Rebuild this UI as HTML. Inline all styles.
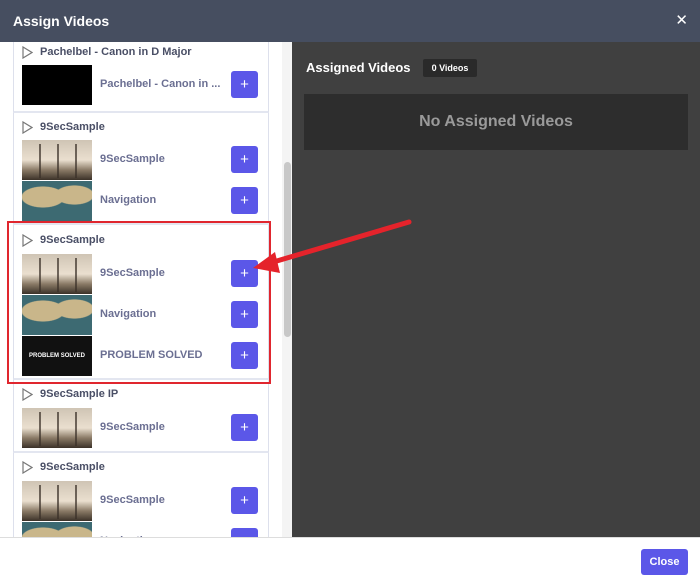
<!DOCTYPE html>
<html><head><style>
*{box-sizing:border-box;margin:0;padding:0}
body{width:700px;height:585px;overflow:hidden;font-family:"Liberation Sans",sans-serif;background:#fff;position:relative}
.hdr{position:absolute;left:0;top:0;width:700px;height:42px;background:#464e60;color:#fff;font-weight:bold;font-size:14px;padding:13px 0 0 13px}
.x{position:absolute;right:12px;top:11px;font-size:15px;color:#fff;font-weight:normal}
.left{position:absolute;left:0;top:42px;width:292px;height:495px;background:#fff;overflow:hidden}
.sb{position:absolute;left:284px;top:120px;width:7px;height:175px;background:#c8c8c8;border-radius:4px}
.sbt{position:absolute;left:282px;top:0;width:10px;height:495px;background:#f4f4f4}
.right{position:absolute;left:292px;top:42px;width:408px;height:495px;background:#404040}
.foot{position:absolute;left:0;top:537px;width:700px;height:48px;background:#fff;border-top:1px solid #ddd}
.close{position:absolute;left:641px;top:549px;width:47px;height:26px;background:#5b57e8;color:#fff;font-weight:bold;font-size:11px;text-align:center;line-height:26px;border-radius:3px}
.card{position:absolute;left:13px;width:256px;border-left:1px solid #dde0ec;border-right:1px solid #dde0ec;border-bottom:2px solid #e3e6f0}
.ct{position:absolute;left:8px;font-size:11px;font-weight:bold;color:#4a4f66;padding-left:18px}
.ct svg{position:absolute;left:0;top:0}
.row{position:absolute;left:8px;width:240px;height:40px}
.th{position:absolute;left:0;top:0;width:70px;height:40px}
.nm{position:absolute;left:78px;top:13px;font-size:11px;color:#6b6f92;font-weight:bold;white-space:nowrap}
.pl{position:absolute;left:209px;top:6px;width:27px;height:27px;background:#5b57e8;border-radius:3px;color:#fff;text-align:center;line-height:27px;font-size:15px}
.blk{background:#000}
.palm{background:linear-gradient(180deg,#cfc4b4 0%,#eadfcf 50%,#8a7a66 75%,#3b3128 100%)}
.palm:after{content:"";position:absolute;left:8px;top:4px;width:54px;height:34px;background:repeating-linear-gradient(90deg,transparent 0 9px,#3a3028 9px 11px,transparent 11px 18px);opacity:.7}
.map{background:radial-gradient(ellipse at 30% 40%,#c9b68a 0 30%,transparent 32%),radial-gradient(ellipse at 75% 35%,#c9b68a 0 25%,transparent 27%),#3d6a72}
.ps{background:#111;color:#fff;font-size:6px;font-weight:bold;text-align:center;line-height:40px}
</style></head><body>
<div class="hdr">Assign Videos<span class="x">✕</span></div>
<div class="left">
<div class="sbt"></div><div class="sb"></div>
<div class="card" style="top:-2px;height:73px"><div class="ct" style="top:6px"><svg width="11" height="13"><path d="M1 1 L10 6.5 L1 12 Z" fill="none" stroke="#777" stroke-width="1.2"/></svg>Pachelbel - Canon in D Major</div>
<div class="row" style="top:25px"><div class="th blk"></div><div class="nm">Pachelbel - Canon in ...</div><div class="pl">+</div></div></div>
<div class="card" style="top:71px;height:112px"><div class="ct" style="top:8px"><svg width="11" height="13"><path d="M1 1 L10 6.5 L1 12 Z" fill="none" stroke="#777" stroke-width="1.2"/></svg>9SecSample</div>
<div class="row" style="top:27px"><div class="th palm"></div><div class="nm">9SecSample</div><div class="pl">+</div></div>
<div class="row" style="top:68px"><div class="th map"></div><div class="nm">Navigation</div><div class="pl">+</div></div></div>
<div class="card" style="top:183px;height:155px"><div class="ct" style="top:9px"><svg width="11" height="13"><path d="M1 1 L10 6.5 L1 12 Z" fill="none" stroke="#777" stroke-width="1.2"/></svg>9SecSample</div>
<div class="row" style="top:29px"><div class="th palm"></div><div class="nm">9SecSample</div><div class="pl">+</div></div>
<div class="row" style="top:70px"><div class="th map"></div><div class="nm">Navigation</div><div class="pl">+</div></div>
<div class="row" style="top:111px"><div class="th ps">PROBLEM SOLVED</div><div class="nm">PROBLEM SOLVED</div><div class="pl">+</div></div></div>
<div class="card" style="top:338px;height:73px"><div class="ct" style="top:8px"><svg width="11" height="13"><path d="M1 1 L10 6.5 L1 12 Z" fill="none" stroke="#777" stroke-width="1.2"/></svg>9SecSample IP</div>
<div class="row" style="top:28px"><div class="th palm"></div><div class="nm">9SecSample</div><div class="pl">+</div></div></div>
<div class="card" style="top:411px;height:120px"><div class="ct" style="top:8px"><svg width="11" height="13"><path d="M1 1 L10 6.5 L1 12 Z" fill="none" stroke="#777" stroke-width="1.2"/></svg>9SecSample</div>
<div class="row" style="top:28px"><div class="th palm"></div><div class="nm">9SecSample</div><div class="pl">+</div></div>
<div class="row" style="top:69px"><div class="th map"></div><div class="nm">Navigation</div><div class="pl">+</div></div></div>
</div>
<div class="right">
<div style="position:absolute;left:14px;top:18px;color:#fff;font-weight:bold;font-size:13px">Assigned Videos</div>
<div style="position:absolute;left:131px;top:17px;width:54px;height:18px;background:#2a2a2a;color:#fff;font-size:9px;font-weight:bold;text-align:center;line-height:18px;border-radius:2px">0 Videos</div>
<div style="position:absolute;left:12px;top:52px;width:384px;height:56px;background:#2d2d2d;color:#9a9a9a;font-weight:bold;font-size:16px;text-align:center;line-height:56px">No Assigned Videos</div>
</div>
<div class="foot"></div>
<div class="close">Close</div>
<div style="position:absolute;left:7px;top:221px;width:264px;height:163px;border:2px solid #e0262e"></div>
<svg style="position:absolute;left:0;top:0" width="700" height="585"><line x1="409" y1="222" x2="270" y2="263" stroke="#e5232b" stroke-width="5" stroke-linecap="round"/><polygon points="253,268 275,252 280,273" fill="#e5232b"/></svg>
</body></html>
